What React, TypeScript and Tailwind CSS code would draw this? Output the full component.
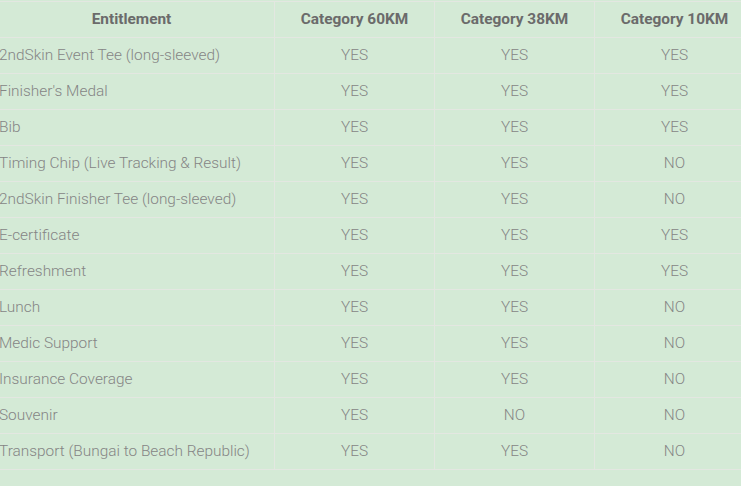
import React from 'react';

const rows: [string, string, string, string][] = [
  ['2ndSkin Event Tee (long-sleeved)', 'YES', 'YES', 'YES'],
  ["Finisher's Medal", 'YES', 'YES', 'YES'],
  ['Bib', 'YES', 'YES', 'YES'],
  ['Timing Chip (Live Tracking & Result)', 'YES', 'YES', 'NO'],
  ['2ndSkin Finisher Tee (long-sleeved)', 'YES', 'YES', 'NO'],
  ['E-certificate', 'YES', 'YES', 'YES'],
  ['Refreshment', 'YES', 'YES', 'YES'],
  ['Lunch', 'YES', 'YES', 'NO'],
  ['Medic Support', 'YES', 'YES', 'NO'],
  ['Insurance Coverage', 'YES', 'YES', 'NO'],
  ['Souvenir', 'YES', 'NO', 'NO'],
  ['Transport (Bungai to Beach Republic)', 'YES', 'YES', 'NO'],
];

const App: React.FC = () => {
  return (
    <div className="w-[741px] h-[486px] overflow-hidden bg-[#d4ead6] font-['Roboto',sans-serif]">
      <table className="-ml-[12px] mt-px w-[766px] border-collapse table-fixed text-[15.4px]">
        <colgroup>
          <col className="w-[286px]" />
          <col className="w-[160px]" />
          <col className="w-[160px]" />
          <col className="w-[160px]" />
        </colgroup>
        <thead>
          <tr className="h-[36px]">
            <th className="border border-[#e3e7e1] font-bold text-[#6b6b6b] text-center">Entitlement</th>
            <th className="border border-[#e3e7e1] font-bold text-[#6b6b6b] text-center">Category 60KM</th>
            <th className="border border-[#e3e7e1] font-bold text-[#6b6b6b] text-center">Category 38KM</th>
            <th className="border border-[#e3e7e1] font-bold text-[#6b6b6b] text-center">Category 10KM</th>
          </tr>
        </thead>
        <tbody>
          {rows.map((r, i) => (
            <tr key={i} className="h-[36px]">
              <td className="border border-[#e3e7e1] pl-[10px] font-light text-[#858585]">{r[0]}</td>
              <td className="border border-[#e3e7e1] text-center font-light text-[#858585]">{r[1]}</td>
              <td className="border border-[#e3e7e1] text-center font-light text-[#858585]">{r[2]}</td>
              <td className="border border-[#e3e7e1] text-center font-light text-[#858585]">{r[3]}</td>
            </tr>
          ))}
        </tbody>
      </table>
    </div>
  );
};

export default App;
